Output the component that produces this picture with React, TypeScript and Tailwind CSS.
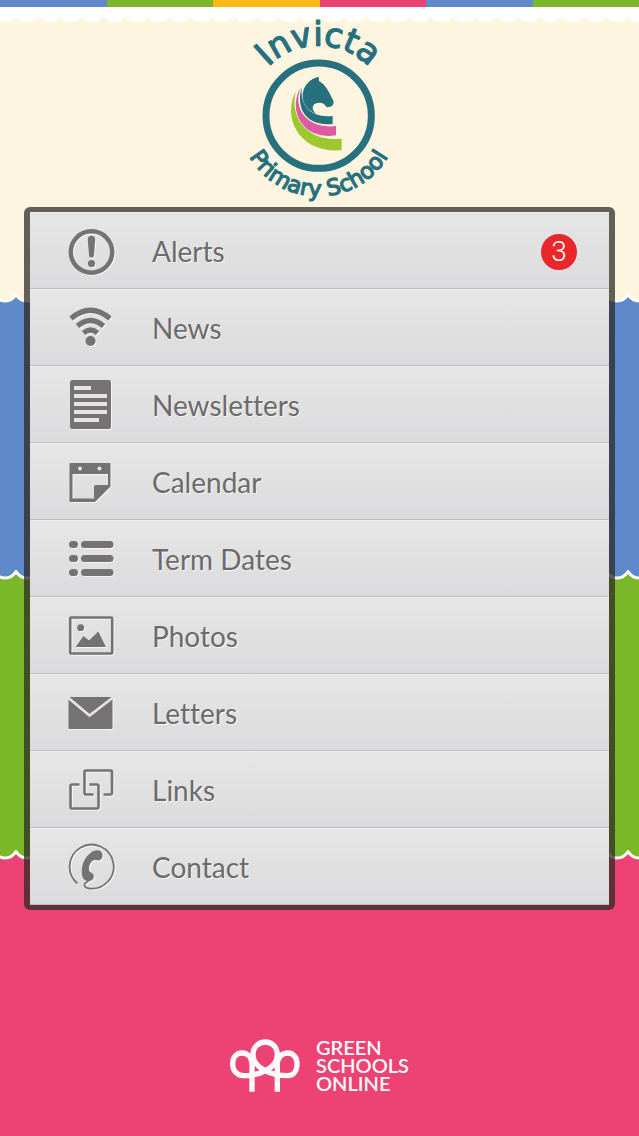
import type { ReactNode } from 'react';

type MenuItem = {
  label: string;
  icon: ReactNode;
  count?: number;
};

const MENU: MenuItem[] = [
  {
    label: 'Alerts',
    count: 3,
    icon: (
      <>
        <circle cx="23.5" cy="26" r="20.7" fill="none" stroke="currentColor" strokeWidth="4.4" />
        <path d="M19.8 13.5a3.7 3.7 0 0 1 7.4 0L26 29a2.5 2.5 0 0 1-5 0z" />
        <circle cx="23.5" cy="37.5" r="3.6" />
      </>
    ),
  },
  {
    label: 'News',
    icon: (
      <>
        <g fill="none" stroke="currentColor" strokeWidth="5.2">
          <path d="M3 15.5Q22.5-1 42 15.5" />
          <path d="M9.5 23Q22.5 12 35.5 23" />
          <path d="M15.5 30Q22.5 24 29.5 30" />
        </g>
        <circle cx="22.5" cy="38" r="5" />
      </>
    ),
  },
  {
    label: 'Newsletters',
    icon: (
      <>
        <rect x="2" y="0" width="41" height="49" rx="2.5" />
        <g fill="#e5e5e5">
          <rect x="6" y="6" width="17" height="4" />
          <rect x="6" y="14" width="33" height="4" />
          <rect x="6" y="22" width="33" height="4" />
          <rect x="6" y="30" width="33" height="4" />
          <rect x="6" y="38" width="25" height="4" />
        </g>
      </>
    ),
  },
  {
    label: 'Calendar',
    icon: (
      <>
        <path
          fillRule="evenodd"
          d="M2.5 6H41.5a1 1 0 0 1 1 1V29.5L27 45H2.5a1 1 0 0 1-1-1V7a1 1 0 0 1 1-1zM4.5 17V41.5H26V30a2 2 0 0 1 2-2H40V17z"
        />
        <g fill="#e5e5e5">
          <circle cx="12" cy="11.5" r="2" />
          <circle cx="31.5" cy="11.5" r="2" />
        </g>
      </>
    ),
  },
  {
    label: 'Term Dates',
    icon: (
      <>
        <rect x="1" y="7" width="9" height="7" rx="3.5" />
        <rect x="13" y="7" width="32.5" height="7" rx="3.5" />
        <rect x="1" y="21" width="9" height="7" rx="3.5" />
        <rect x="13" y="21" width="32.5" height="7" rx="3.5" />
        <rect x="1" y="35" width="9" height="7" rx="3.5" />
        <rect x="13" y="35" width="32.5" height="7" rx="3.5" />
      </>
    ),
  },
  {
    label: 'Photos',
    icon: (
      <>
        <rect
          x="2.2"
          y="6.5"
          width="42"
          height="36"
          rx="1"
          fill="none"
          stroke="currentColor"
          strokeWidth="2.6"
        />
        <circle cx="12.7" cy="16.7" r="3.4" />
        <path d="M7.7 36L15.5 25L21 29.5L30.3 20.5L38 36z" />
      </>
    ),
  },
  {
    label: 'Letters',
    icon: (
      <>
        <rect x="0.5" y="9" width="44" height="32" rx="1.5" />
        <path d="M0 9.5L21.5 27.5L45 9.5" fill="none" stroke="#e5e5e5" strokeWidth="2.6" />
      </>
    ),
  },
  {
    label: 'Links',
    icon: (
      <g fill="none" stroke="currentColor" strokeWidth="2.6" strokeLinejoin="round">
        <path d="M35.5 29.5H42.5a1.5 1.5 0 0 0 1.5-1.5V7a1.5 1.5 0 0 0-1.5-1.5H18A1.5 1.5 0 0 0 16.500 7V28a1.5 1.5 0 0 0 1.5 1.5H25.5" />
        <path d="M11.5 19.5H4A1.5 1.5 0 0 0 2.5 21V42a1.5 1.5 0 0 0 1.5 1.5H29a1.5 1.5 0 0 0 1.5-1.5V21a1.5 1.5 0 0 0-1.5-1.5H21.5" />
      </g>
    ),
  },
  {
    label: 'Contact',
    icon: (
      <>
        <path
          d="M9.500 41.500A22 22 0 1 1 21 46.500C17 46 15.500 43.500 17 41.500C18.500 40 21 40 21.500 37"
          fill="none"
          stroke="currentColor"
          strokeWidth="1.8"
        />
        <path d="M22.5 11C25 8 31 7 33.5 10C35 13 35 16.5 32 18C29.5 19 27 17 25 18.5C21.5 21 20 26.5 21.5 29.5C23 31 25.5 31 25.8 34C26 37.5 23 39.5 19.5 39C15.5 38.5 14 35 13.8 30C13.7 22 17 15 22.5 11z" />
      </>
    ),
  },
];

// cusps repeat every 21.86 units, the first full one sits at x = 16
const SCALLOP = 'M-5.86 2.5' + 'c3 5 6 6.5 10.93 6.5s7.93-1.5 10.93-6.5'.repeat(31);

function Scallop({ className }: { className: string }) {
  return (
    <svg
      viewBox="0 0 639 14"
      preserveAspectRatio="none"
      className={`block h-[14px] w-full ${className}`}
      aria-hidden="true"
    >
      <path d={`${SCALLOP}V-6H-6z`} fill="currentColor" />
      <path d={SCALLOP} fill="none" stroke="#fffdf8" strokeWidth="3" strokeLinejoin="round" />
    </svg>
  );
}

function Backdrop() {
  return (
    <div
      className="col-start-1 row-start-1 grid grid-rows-[7px_285fr_277fr_280fr_287fr]"
      aria-hidden="true"
    >
      <div className="grid grid-cols-6">
        <div className="bg-[#6189c8]" />
        <div className="bg-[#7bb829]" />
        <div className="bg-[#fdb913]" />
        <div className="bg-[#ea4273]" />
        <div className="bg-[#6189c8]" />
        <div className="bg-[#7bb829]" />
      </div>
      <div className="bg-[#fef5e1]">
        <div className="h-[5px] bg-white" />
        <Scallop className="text-white" />
      </div>
      <div className="bg-[#5d89cb]">
        <Scallop className="text-[#fef5e1]" />
      </div>
      <div className="bg-[#7bb829]">
        <Scallop className="text-[#5d89cb]" />
      </div>
      <div className="bg-[#ec4374]">
        <Scallop className="text-[#7bb829]" />
      </div>
    </div>
  );
}

function SchoolLogo() {
  return (
    <svg
      viewBox="0 0 540 591"
      className="h-[197px] w-[180px]"
      role="img"
      aria-label="Invicta Primary School"
    >
      <defs>
        <path id="arc-top" d="M56 317A210 210 0 0 1 476 317" />
        <path id="arc-bottom" d="M24 317A242 242 0 0 0 508 317" />
      </defs>
      <g
        fill="#27717f"
        stroke="#27717f"
        strokeWidth="4"
        strokeLinejoin="round"
        textAnchor="middle"
        className="font-['DejaVu_Sans',sans-serif]"
      >
        <text fontSize="101">
          <textPath href="#arc-top" startOffset="50%">
            Invicta
          </textPath>
        </text>
        <text fontSize="67">
          <textPath href="#arc-bottom" startOffset="50%">
            Primary School
          </textPath>
        </text>
      </g>
      <circle cx="266" cy="317" r="158" fill="none" stroke="#27717f" strokeWidth="21" />
      <path
        fill="#27717f"
        d="M266 200L267 213C286 222 298 248 309 270C314 282 307 291 296 291C290 294 287 287 281 281C270 276 254 278 249 288C246 298 252 306 260 312C232 302 216 280 218 252C221 226 240 206 266 200z"
      />
      <path fill="#27717f" d="M215 232C199 285 218 350 308 342V318C244 324 210 290 215 232z" />
      <path fill="#dd5ba0" d="M212 232C174 295 211 392 318 376V348C236 358 186 302 212 232z" />
      <path fill="#9ec72f" d="M198 244C153 325 212 434 335 420V386C232 398 177 322 198 244z" />
    </svg>
  );
}

function GreenSchoolsMark() {
  return (
    <svg viewBox="33 37 210 159" className="h-[53px] w-[70px]" aria-hidden="true">
      <path
        d="M99 195V112C99 92 86 79 69 79C51 79 41 94 41 112C41 132 54 147 73 147C120 147 175 125 175 84C175 60 158 46 139 46C120 46 102 60 102 84C102 125 160 147 206 147C224 147 234 132 234 112C234 94 224 79 207 79C190 79 175 92 175 112V195"
        fill="none"
        stroke="#fffafa"
        strokeWidth="16"
      />
    </svg>
  );
}

function MenuRow({ item }: { item: MenuItem }) {
  return (
    <li>
      <a
        href={`#${item.label.toLowerCase().replace(' ', '-')}`}
        className="flex h-[77px] items-center gap-9 border-t border-b border-t-[#f0f0f0] border-b-[#bdbdbf] bg-linear-to-b from-[#e6e6e6] to-[#dbdbdd] pt-[3px] pr-8 pl-[38px] text-[#747273]"
      >
        <svg
          viewBox="0 0 48 52"
          className="h-[52px] w-12 shrink-0 drop-shadow-[1px_1px_0_#f5f5f5]"
          fill="currentColor"
          aria-hidden="true"
        >
          {item.icon}
        </svg>
        <span className="flex-1 pb-[2px] text-[28px] leading-9 text-[#6c6a6b] [font-variant-ligatures:none] [text-shadow:1px_1px_0_#f5f5f5]">
          {item.label}
        </span>
        {item.count && (
          <span className="flex size-9 items-center justify-center rounded-full bg-[#e92629] font-['Roboto',sans-serif] text-[28px] leading-none font-light text-white">
            {item.count}
          </span>
        )}
      </a>
    </li>
  );
}

export default function App() {
  return (
    <div className="grid min-h-screen font-['Lato',sans-serif]">
      <Backdrop />

      <div className="z-10 col-start-1 row-start-1 flex flex-col px-6 pt-[10px] pb-11">
        <header className="flex justify-center">
          <SchoolLogo />
        </header>

        <nav
          aria-label="Main menu"
          className="rounded-md border-x-[6px] border-y-[5px] border-[#2f2b27]/75 bg-[#dbdbdd] bg-clip-padding"
        >
          <ul>
            {MENU.map((item) => (
              <MenuRow key={item.label} item={item} />
            ))}
          </ul>
        </nav>

        <footer className="mt-auto flex items-center justify-center gap-4">
          <GreenSchoolsMark />
          <p className="text-[20px] leading-[18px] font-semibold text-[#fffafa]">
            GREEN
            <br />
            SCHOOLS
            <br />
            ONLINE
          </p>
        </footer>
      </div>
    </div>
  );
}
